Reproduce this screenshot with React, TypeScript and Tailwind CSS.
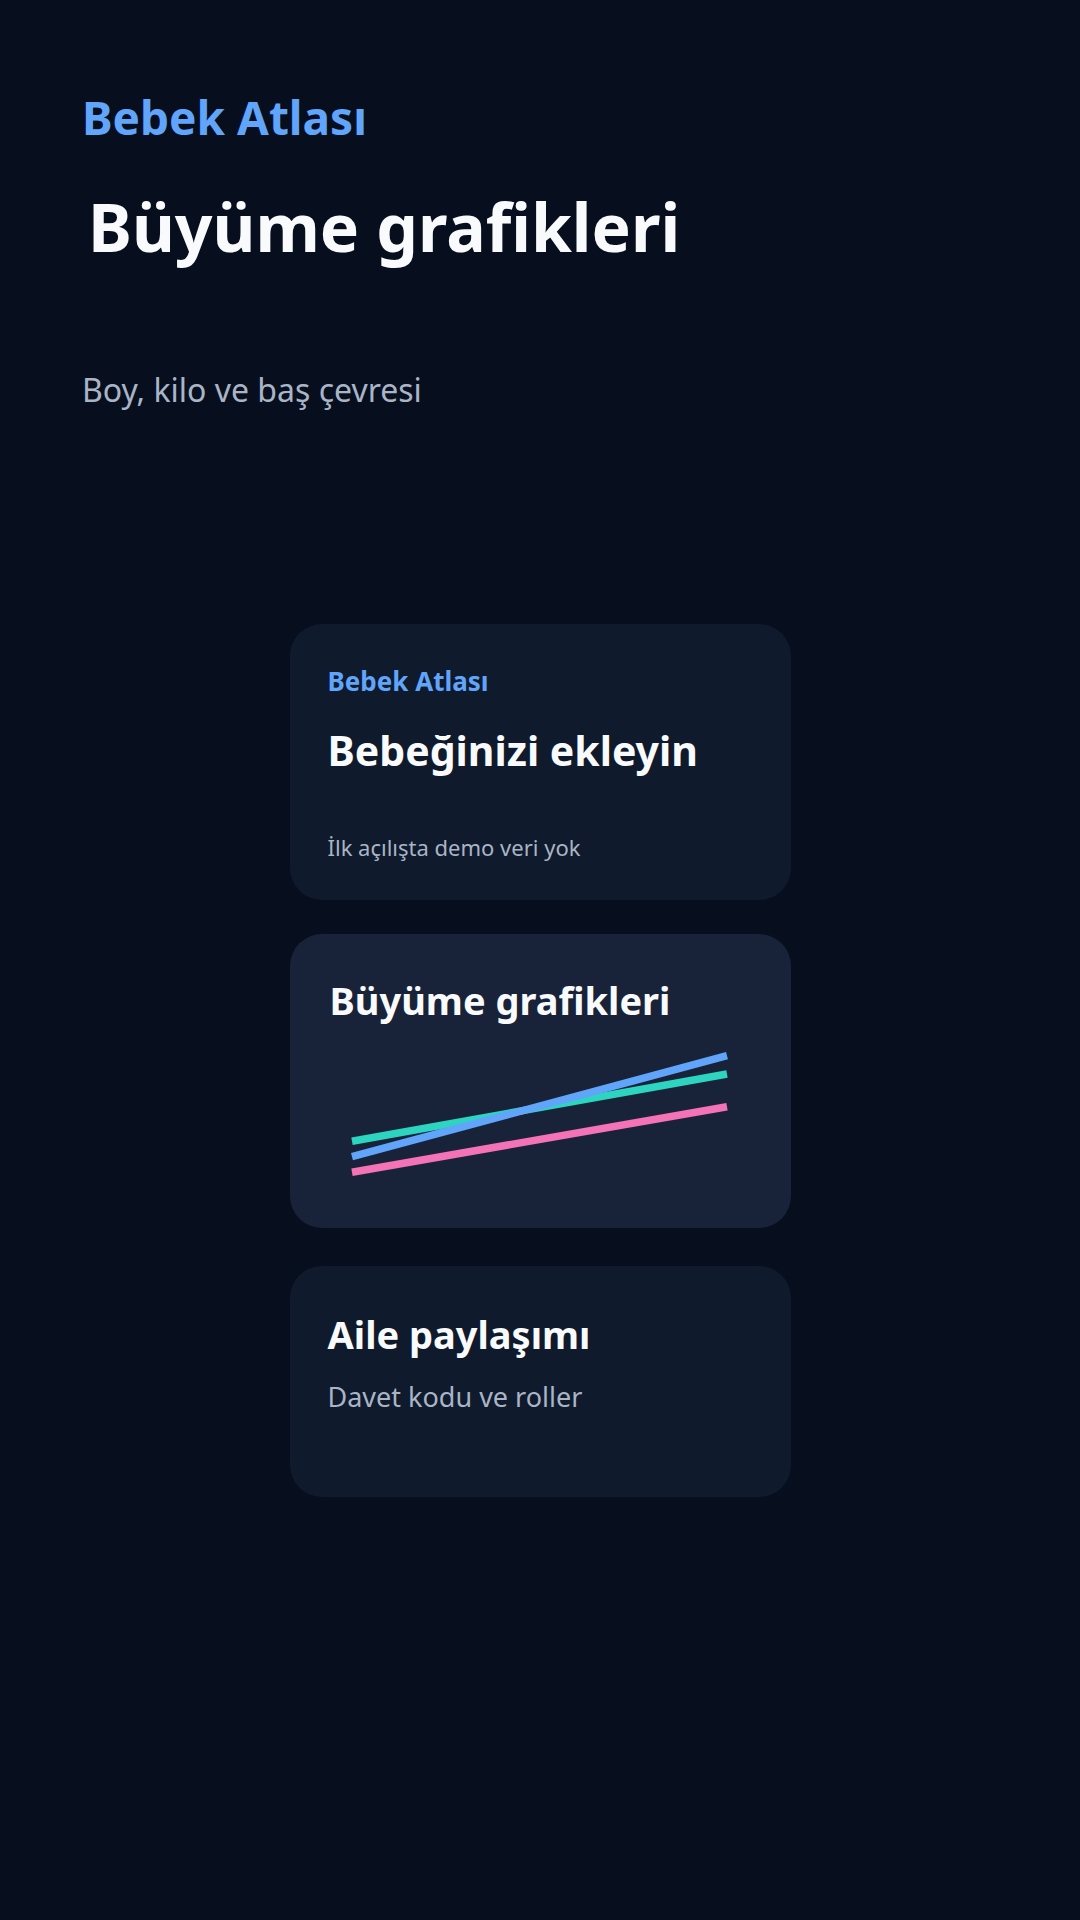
import React from 'react';

const font = { fontFamily: '"Noto Sans", "Open Sans", sans-serif' };

const GrowthLines: React.FC = () => (
  <svg width="420" height="150" viewBox="0 0 420 150" className="mt-[21px] block">
    <line x1="22" y1="101.3" x2="397" y2="34" stroke="#2dd4bf" strokeWidth="7.5" />
    <line x1="22" y1="116.7" x2="397" y2="15.7" stroke="#60a5fa" strokeWidth="7.5" />
    <line x1="22" y1="132.3" x2="397" y2="66.7" stroke="#f472b6" strokeWidth="7.5" />
  </svg>
);

export default function App() {
  return (
    <div className="min-h-[1920px] w-full bg-[#070f1e] text-white" style={font}>
      <header className="pl-[82px] pt-[94px]">
        <div className="text-[46px] font-bold leading-none text-[#60a5fa]">Bebek Atlası</div>
        <h1 className="ml-[6px] mt-[53px] text-[66px] font-bold leading-none text-[#f8fafc]">Büyüme grafikleri</h1>
        <p className="mt-[115px] text-[32px] leading-none text-[#a9b5c6]">Boy, kilo ve baş çevresi</p>
      </header>

      <main className="mt-[218px] flex flex-col items-center">
        <section className="h-[276px] w-[501px] rounded-[32px] bg-[#0f1a2c] pl-[38px] pt-[44px]">
          <div className="text-[26px] font-bold leading-none text-[#60a5fa]">Bebek Atlası</div>
          <h2 className="mt-[36px] text-[41px] font-bold leading-none text-[#f8fafc]">Bebeğinizi ekleyin</h2>
          <p className="mt-[65px] text-[22px] leading-none text-[#a9b5c6]">İlk açılışta demo veri yok</p>
        </section>

        <section className="mt-[34px] h-[294px] w-[501px] rounded-[32px] bg-[#18233a] pl-[40px] pt-[47px]">
          <h2 className="text-[38px] font-bold leading-none text-[#f8fafc]">Büyüme grafikleri</h2>
          <GrowthLines />
        </section>

        <section className="mt-[38px] h-[231px] w-[501px] rounded-[32px] bg-[#0f1a2c] pl-[38px] pt-[49px]">
          <h2 className="text-[38px] font-bold leading-none text-[#f8fafc]">Aile paylaşımı</h2>
          <p className="mt-[30px] text-[27px] leading-none text-[#a9b5c6]">Davet kodu ve roller</p>
        </section>
      </main>
    </div>
  );
}
